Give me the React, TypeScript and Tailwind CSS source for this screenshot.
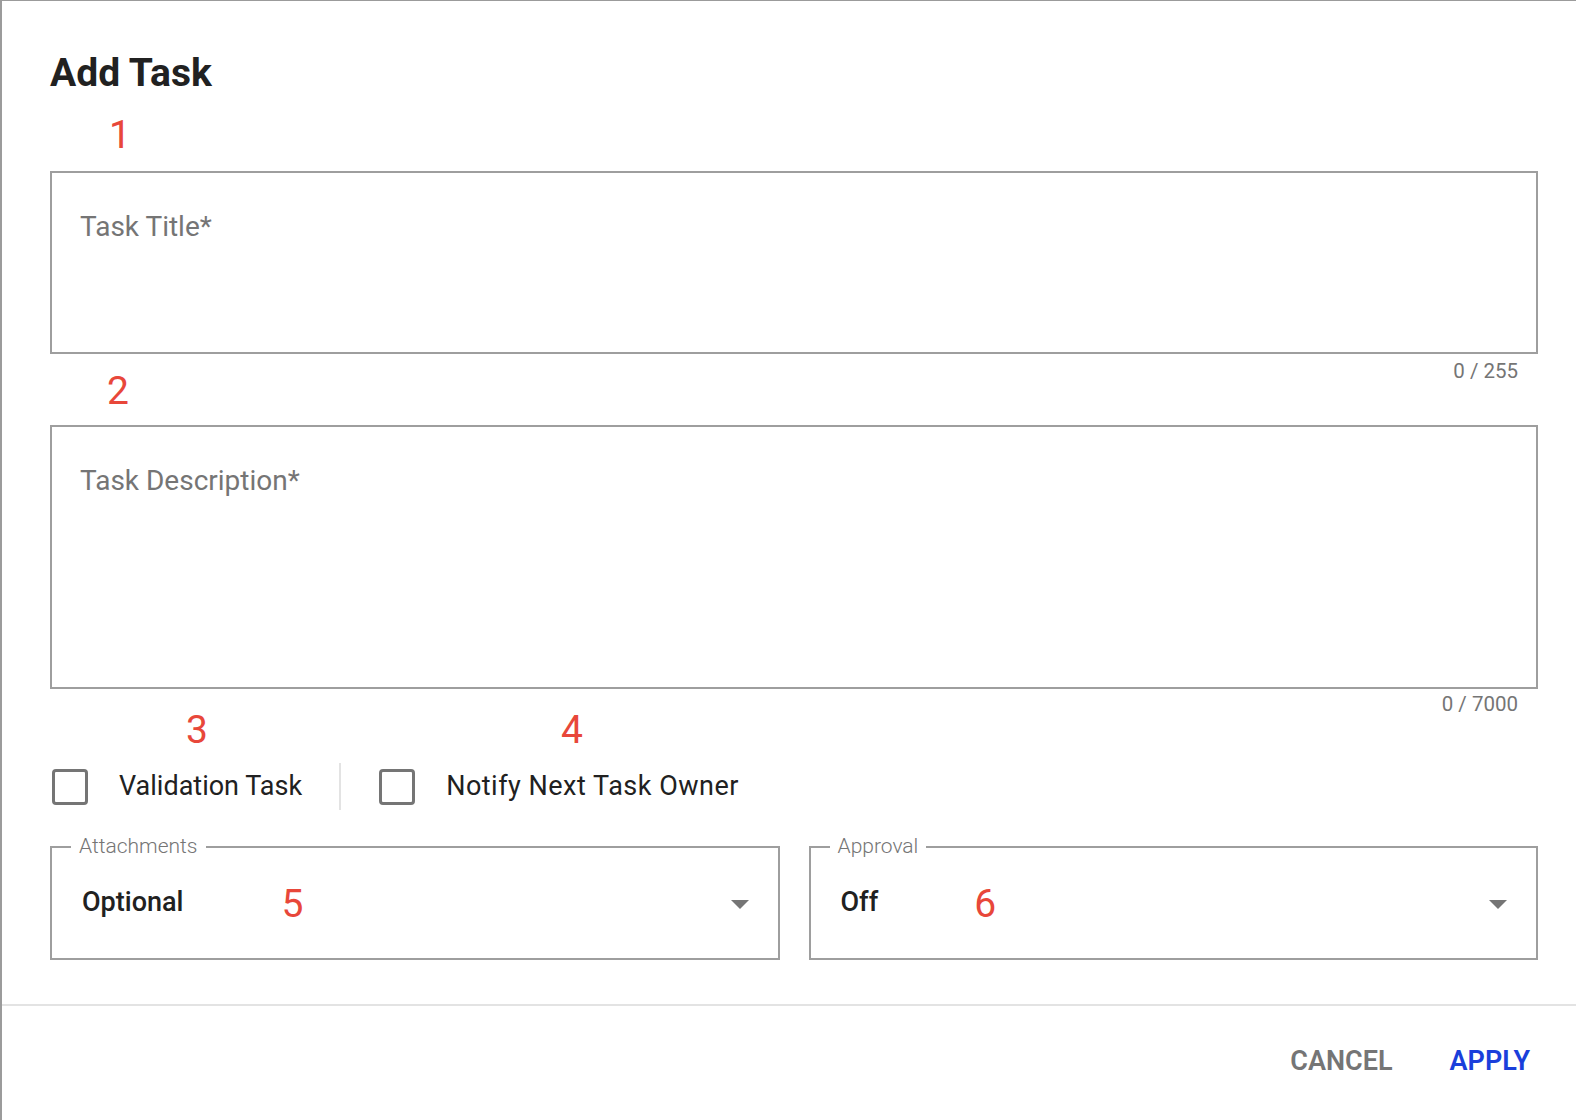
import React from "react";

const font = { fontFamily: "Roboto, 'Liberation Sans', sans-serif" };

function Marker({ children, className = "" }: { children: React.ReactNode; className?: string }) {
  return (
    <span className={`block h-[39px] text-[39px] leading-none text-[#e8473a] ${className}`}>{children}</span>
  );
}

function Checkbox({ label, className = "" }: { label: string; className?: string }) {
  return (
    <label className="flex items-center gap-[31px]">
      <span className="block w-9 h-9 rounded-[4px] border-[3px] border-[#757575] bg-white" />
      <span className={`text-[27px] leading-none text-[#212121] ${className}`}>{label}</span>
    </label>
  );
}

function Select({ legend, value, marker, markerGap }: { legend: string; value: string; marker: string; markerGap: string }) {
  return (
    <fieldset className="h-[124px] border-2 border-[#9e9e9e] pl-[30px] pr-[29px] min-w-0">
      <legend className="ml-[-11px] px-[8px] text-[21px] leading-none font-light text-[#757575]">{legend}</legend>
      <div className="flex items-center h-[100px] pb-[10px]">
        <span className={`text-[27px] leading-none font-medium text-[#212121] ${markerGap}`}>{value}</span>
        <span className="mt-[4px] text-[39px] leading-none text-[#e8473a]">{marker}</span>
        <svg className="ml-auto mt-[5px]" width="18" height="9" viewBox="0 0 18 9">
          <path d="M0 0 L18 0 L9 9 Z" fill="#757575" />
        </svg>
      </div>
    </fieldset>
  );
}

export default function App() {
  return (
    <div className="h-[1120px] flex flex-col bg-white border-t border-l-2 border-[#9b9b9b]" style={font}>
      <div className="flex-1 pl-[48px] pr-[38px] pt-[53px]">
        {/* Header */}
        <h1 className="h-[39px] text-[39px] leading-none font-bold text-[#212121]">Add Task</h1>

        <Marker className="mt-[23px] ml-[59px]">1</Marker>

        {/* Title */}
        <div className="mt-[16px] h-[183px] border-2 border-[#9e9e9e] pl-[28px] pt-[40px]">
          <span className="text-[28px] leading-none text-[#757575]">Task Title*</span>
        </div>
        <div className="flex items-start justify-between">
          <Marker className="mt-[18px] ml-[57px]">2</Marker>
          <span className="mt-[7px] mr-[20px] text-[20.5px] leading-none text-[#757575]">0 / 255</span>
        </div>

        {/* Description */}
        <div className="mt-[14px] h-[264px] border-2 border-[#9e9e9e] pl-[28px] pt-[40px]">
          <span className="text-[28px] leading-none text-[#757575]">Task Description*</span>
        </div>
        <div className="flex justify-end">
          <span className="mt-[5px] mr-[20px] h-[20px] text-[20.5px] leading-none text-[#757575]">0 / 7000</span>
        </div>
        <div className="flex -mt-[3px]">
          <Marker className="ml-[136px]">3</Marker>
          <Marker className="ml-[353px]">4</Marker>
        </div>

        {/* Options */}
        <div className="mt-[13px] h-[47px] flex items-center pl-[2px]">
          <Checkbox label="Validation Task" />
          <span className="ml-[37px] mr-[38px] w-[2px] h-[47px] bg-[#e3e3e3]" />
          <Checkbox label="Notify Next Task Owner" className="tracking-[0.5px]" />
        </div>

        <div className="mt-[26px] grid grid-cols-2 gap-x-[29px]">
          <Select legend="Attachments" value="Optional" marker="5" markerGap="mr-[98px]" />
          <Select legend="Approval" value="Off" marker="6" markerGap="mr-[96px]" />
        </div>
      </div>

      {/* Footer */}
      <div className="h-[116px] border-t-2 border-[#e3e3e3] flex items-center justify-end gap-[57px] pr-[46px] pb-[4px]">
        <button className="text-[27px] leading-none font-semibold text-[#757575]">CANCEL</button>
        <button className="text-[27px] leading-none font-semibold text-[#1a3fdb]">APPLY</button>
      </div>
    </div>
  );
}
